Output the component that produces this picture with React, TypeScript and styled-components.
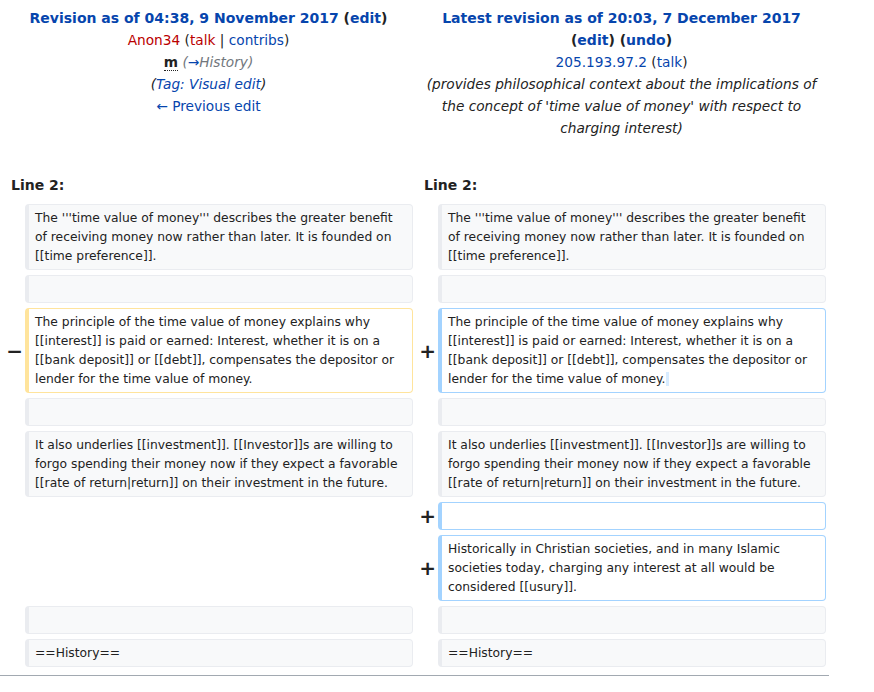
import React from "react";
import styled, { createGlobalStyle, css } from "styled-components";

const GlobalStyle = createGlobalStyle`
  html, body { margin: 0; padding: 0; background: #fff; }
  body {
    font-family: "DejaVu Sans", sans-serif;
    font-size: 14px;
    color: #222;
  }
`;

const Page = styled.div`
  width: 830px;
`;

const Columns = css`
  display: grid;
  grid-template-columns: 17px 388px 17px 388px;
  column-gap: 4px;
  padding: 0 4px;
`;

const HeaderRow = styled.div`
  ${Columns};
  padding-top: 7px;
`;

const Title = styled.div`
  grid-column: span 2;
  text-align: center;
  line-height: 22px;
`;

const Line = styled.div<{ $bold?: boolean; $italic?: boolean }>`
  font-weight: ${(p) => (p.$bold ? "bold" : "normal")};
  font-style: ${(p) => (p.$italic ? "italic" : "normal")};
  font-size: ${(p) => (p.$bold ? "14px" : "13.7px")};
`;

const Link = styled.a<{ $tone?: "blue" | "red" }>`
  color: ${(p) => (p.$tone === "red" ? "#ba0000" : "#0645ad")};
  text-decoration: none;
  cursor: pointer;
`;

const Minor = styled.abbr`
  font-weight: bold;
  text-decoration: none;
  border-bottom: 1px dotted #222;
`;

const AutoComment = styled.span`
  color: #72777d;
  font-style: italic;
`;

const LineRow = styled.div`
  ${Columns};
  margin-top: 35px;
  margin-bottom: 8px;
`;

const LineNo = styled.div`
  grid-column: span 2;
  font-weight: bold;
  line-height: 22px;
  padding-left: 7px;
`;

const DiffTable = styled.div`
  ${Columns};
  row-gap: 5px;
`;

const Marker = styled.div`
  align-self: center;
  text-align: right;
  font-weight: bold;
  font-size: 20px;
  line-height: 1.2;
  margin-right: -2px;
`;

type Kind = "context" | "deleted" | "added";

const borderColor: Record<Kind, string> = {
  context: "#eaecf0",
  deleted: "#ffe49c",
  added: "#a3d3ff",
};

const Cell = styled.div<{ $kind: Kind }>`
  box-sizing: border-box;
  font-size: 12.32px;
  line-height: 19px;
  min-height: 28px;
  white-space: pre-wrap;
  word-wrap: break-word;
  padding: 3.56px 6px;
  border-style: solid;
  border-width: 1px 1px 1px 4px;
  border-radius: 4px;
  border-color: ${(p) => borderColor[p.$kind]};
  background: ${(p) => (p.$kind === "context" ? "#f8f9fa" : "#fff")};
  color: #222;
`;

const Empty = styled.div`
  grid-column: span 2;
`;

const InsChange = styled.ins`
  background: #d8ecff;
  text-decoration: none;
`;

const Divider = styled.hr`
  margin: 8px 0 0;
  border: 0;
  height: 1px;
  background: #a2a9b1;
  width: 829px;
`;

const P1 = "The '''time value of money''' describes the greater benefit of receiving money now rather than later. It is founded on [[time preference]].";
const P2 = "The principle of the time value of money explains why [[interest]] is paid or earned: Interest, whether it is on a [[bank deposit]] or [[debt]], compensates the depositor or lender for the time value of money.";
const P3 = "It also underlies [[investment]]. [[Investor]]s are willing to forgo spending their money now if they expect a favorable [[rate of return|return]] on their investment in the future.";
const P4 = "Historically in Christian societies, and in many Islamic societies today, charging any interest at all would be considered [[usury]].";

export default function App() {
  return (
    <Page>
      <GlobalStyle />
      <HeaderRow>
        <Title>
          <Line $bold>
            <Link>Revision as of 04:38, 9 November 2017</Link> (<Link>edit</Link>)
          </Line>
          <Line>
            <Link $tone="red">Anon34</Link> (<Link $tone="red">talk</Link> | <Link>contribs</Link>)
          </Line>
          <Line>
            <Minor title="This is a minor edit">m</Minor>{" "}
            <AutoComment>
              (<Link>→</Link>History)
            </AutoComment>
          </Line>
          <Line $italic>
            (<Link>Tag: Visual edit</Link>)
          </Line>
          <Line>
            <Link>← Previous edit</Link>
          </Line>
        </Title>
        <Title>
          <Line $bold>
            <Link>Latest revision as of 20:03, 7 December 2017</Link>
          </Line>
          <Line $bold>
            (<Link>edit</Link>) (<Link>undo</Link>)
          </Line>
          <Line>
            <Link>205.193.97.2</Link> (<Link>talk</Link>)
          </Line>
          <Line $italic>
            (provides philosophical context about the implications of the concept of 'time value of money' with respect to charging interest)
          </Line>
        </Title>
      </HeaderRow>

      <LineRow>
        <LineNo>Line 2:</LineNo>
        <LineNo>Line 2:</LineNo>
      </LineRow>

      <DiffTable>
        <Marker />
        <Cell $kind="context">{P1}</Cell>
        <Marker />
        <Cell $kind="context">{P1}</Cell>

        <Marker />
        <Cell $kind="context" />
        <Marker />
        <Cell $kind="context" />

        <Marker>−</Marker>
        <Cell $kind="deleted">{P2}</Cell>
        <Marker>+</Marker>
        <Cell $kind="added">
          {P2}
          <InsChange> </InsChange>
        </Cell>

        <Marker />
        <Cell $kind="context" />
        <Marker />
        <Cell $kind="context" />

        <Marker />
        <Cell $kind="context">{P3}</Cell>
        <Marker />
        <Cell $kind="context">{P3}</Cell>

        <Empty />
        <Marker>+</Marker>
        <Cell $kind="added" />

        <Empty />
        <Marker>+</Marker>
        <Cell $kind="added">{P4}</Cell>

        <Marker />
        <Cell $kind="context" />
        <Marker />
        <Cell $kind="context" />

        <Marker />
        <Cell $kind="context">==History==</Cell>
        <Marker />
        <Cell $kind="context">==History==</Cell>
      </DiffTable>
      <Divider />
    </Page>
  );
}
